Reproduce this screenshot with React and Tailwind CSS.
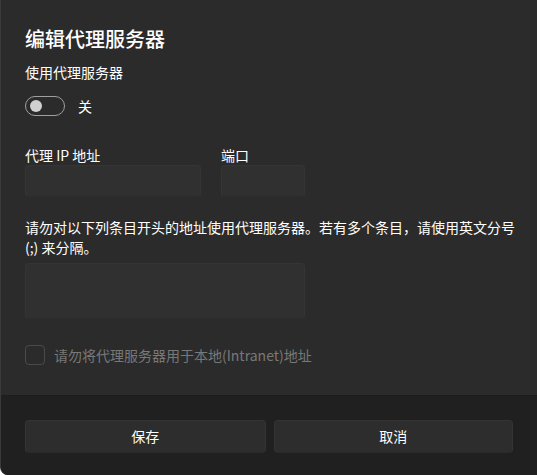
export default function App() {
  return (
    <div
      className="flex h-[475px] w-[537px] flex-col overflow-hidden rounded-bl-[8px] border-l border-[#3a3a3a] bg-[#2b2b2b] text-white"
      style={{ fontFamily: '"Noto Sans CJK SC", "Noto Sans", sans-serif' }}
    >
      <div className="flex flex-1 flex-col px-[24px] pt-[25px]">
        <h1 className="text-[20px] font-medium leading-[28px]">编辑代理服务器</h1>

        <p className="mt-[9px] text-[14px] leading-[20px]">使用代理服务器</p>

        <div className="mt-[14px] flex items-center gap-[13px]">
          <div className="flex h-[20px] w-[40px] items-center rounded-full border border-[#a0a0a0] px-[4px]">
            <span className="h-[12px] w-[12px] rounded-full bg-[#d0d0d0]" />
          </div>
          <span className="text-[14px] leading-[20px]">关</span>
        </div>

        <div className="mt-[30px] flex gap-[20px]">
          <div className="flex flex-col">
            <label className="text-[14px] leading-[18px]">代理 IP 地址</label>
            <div className="mt-[1px] h-[32px] w-[176px] rounded-[4px] border border-[#353535] border-b-[#2c2c2c] bg-[#303030]" />
          </div>
          <div className="flex flex-col">
            <label className="text-[14px] leading-[18px]">端口</label>
            <div className="mt-[1px] h-[32px] w-[84px] rounded-[4px] border border-[#353535] border-b-[#2c2c2c] bg-[#303030]" />
          </div>
        </div>

        <p className="mt-[20px] w-[492px] text-[14px] leading-[20px]">
          请勿对以下列条目开头的地址使用代理服务器。若有多个条目，请使用英文分号 (;) 来分隔。
        </p>

        <div className="mt-[6px] h-[56px] w-[280px] rounded-[4px] border border-[#353535] border-b-[#2c2c2c] bg-[#303030]" />

        <div className="mt-[26px] flex items-center gap-[9px]">
          <span className="h-[20px] w-[20px] rounded-[4px] border border-[#4a4a4a]" />
          <span className="text-[14px] leading-[20px] text-[#787878]">
            请勿将代理服务器用于本地(Intranet)地址
          </span>
        </div>
      </div>

      <div className="flex h-[80px] shrink-0 gap-[8px] border-t border-[#1d1d1d] bg-[#202020] px-[24px] pt-[24px]">
        <button
          type="button"
          className="h-[33px] w-[241px] rounded-[4px] border border-[#343434] border-b-[#2a2a2a] bg-[#2d2d2d] text-[14px] text-white"
        >
          保存
        </button>
        <button
          type="button"
          className="h-[33px] w-[240px] rounded-[4px] border border-[#343434] border-b-[#2a2a2a] bg-[#2d2d2d] text-[14px] text-white"
        >
          取消
        </button>
      </div>
    </div>
  );
}
